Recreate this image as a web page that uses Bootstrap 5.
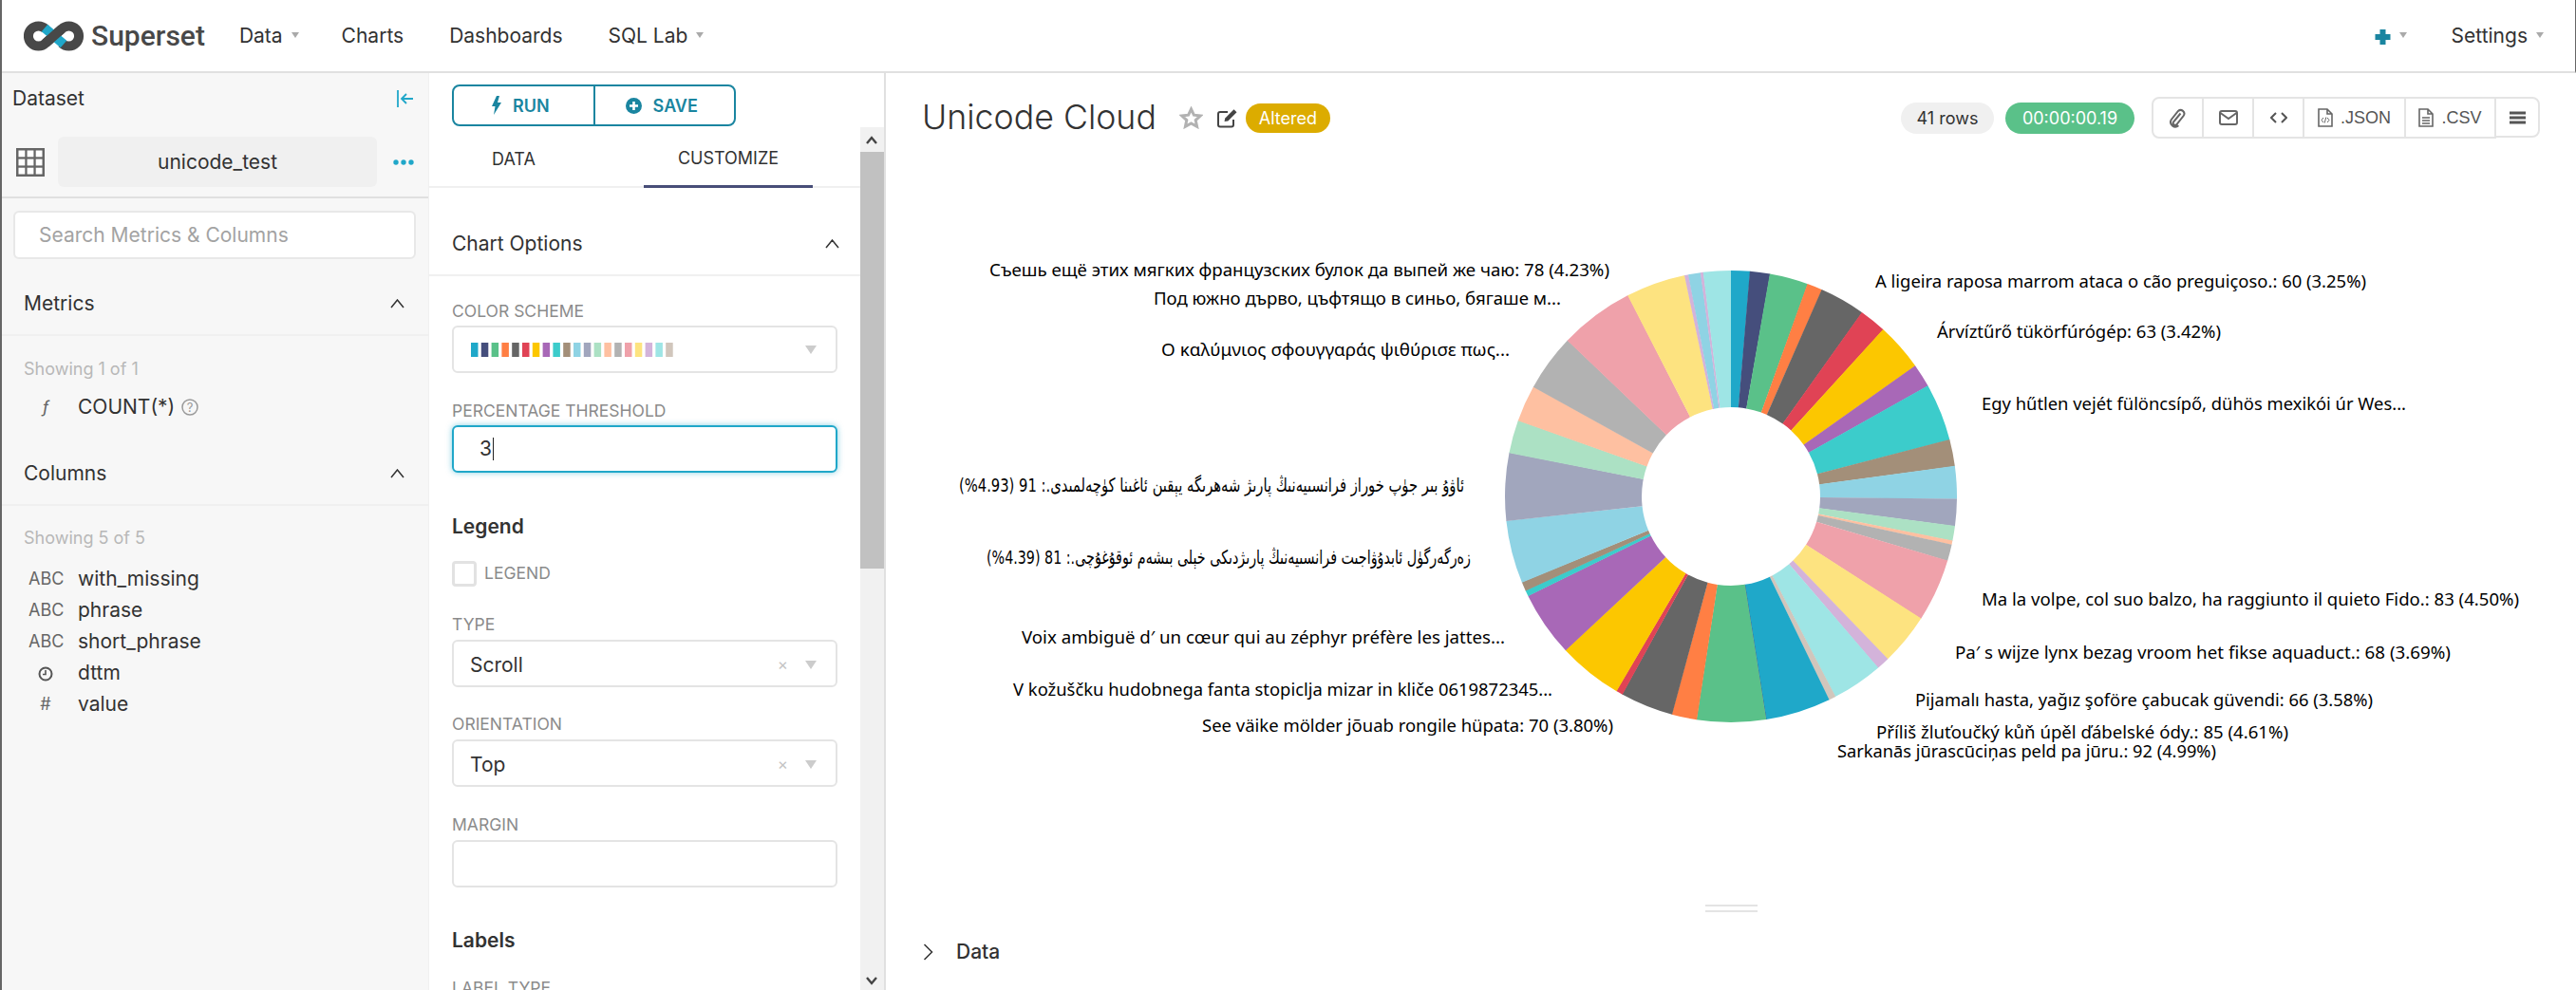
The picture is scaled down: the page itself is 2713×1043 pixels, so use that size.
<!DOCTYPE html>
<html lang="en">
<head>
<meta charset="utf-8">
<title>Unicode Cloud</title>
<link rel="stylesheet" href="https://cdn.jsdelivr.net/npm/bootstrap@5.3.0/dist/css/bootstrap.min.css">
<style>
html,body{height:100%;overflow:hidden}
body{font-family:Inter,"Noto Sans",sans-serif;font-size:21px;color:#323232;background:#fff;border-left:2px solid #666}
.topbar{height:77px;border-bottom:2px solid #e0e0e0;border-right:1px solid #666;padding:0 9px 0 0;background:#fff;flex-wrap:nowrap}
.brand-box{margin:0 0 0 23px;padding:0;gap:7px;color:#484848;font-family:Roboto,sans-serif;font-weight:500;font-size:30px;line-height:1}
.topbar .navbar-nav .nav-link{padding:0 24px;color:#323232;font-size:21px}
.topbar .brand-box+.navbar-nav{margin-left:12px}
.dropdown-toggle::after{border-top:6px solid #aaa;border-left:4px solid transparent;border-right:4px solid transparent;border-bottom:0;margin-left:9px;vertical-align:5px}
.topbar .navbar-nav .nav-link.first-toggle{padding-right:21px}
.topbar .navbar-nav .nav-link.plus-link{padding:0 23px 0 0}
.work-row{height:calc(100% - 77px);min-width:0}
.side-col{width:450px;flex:none;background:#f7f7f7;border-right:1px solid #f0f0f0;overflow:hidden}
.ds-head{height:54px;padding:0 15px 0 11px}
.ds-row{margin-top:13px;height:53px;padding:0 15px}
.ds-name{width:336px;height:53px;margin-left:14px;background:#f0f0f0;border-radius:6px}
.ds-rule{height:12px;border-bottom:2px solid #e0e0e0}
.search-box.form-control{display:block;margin:13px 13px 0 12px;width:424px;height:51px;padding:0 0 0 25px;font-size:21px;border:2px solid #e8e8e8;border-radius:6px;color:#323232}
.search-box::placeholder{color:#a3a3a3}
.sec-head{padding:15px 25px 0 23px;height:81px;border-bottom:2px solid #f0f0f0}
.sec-head.second{height:88px;padding-top:21px}
.hint{color:#b8b8b8;font-size:18px;line-height:27px;padding-left:23px;margin-top:21px}
.hint.second-hint{margin-top:20px}
.col-list{margin-top:10px}
.col-list.tall{margin-top:13px}
.col-item{height:33px;font-size:21px;color:#323232}
.type-mark{width:36px;margin-left:28px;margin-right:16px;color:#666;font-size:18px;text-align:center;line-height:1;flex:none}
.help-mark{margin-left:7px}
.panel-col{width:481px;flex:none;border-right:2px solid #e0e0e0;overflow:hidden}
.panel-top{height:57px;padding:12px 0 0 24px}
.run-group{width:299px;height:44px}
.run-group .btn{width:50%;padding:0 6px 0 0;font-size:18px;font-weight:600;color:#1a85a0;border:2px solid #1a85a0;background:#fff;display:flex;align-items:center;justify-content:center;gap:12px;border-radius:8px}
.btn-group.run-group>.btn+.btn{margin-left:-2px}
.panel-scroll{height:calc(100% - 57px)}
.panel-body{width:454px;flex:none;overflow:hidden}
.fake-bar{width:25px;flex:none;background:#f1f1f1;position:relative}
.fake-thumb{height:439px;margin-top:26px;background:#c1c1c1}
.bar-up,.bar-down{position:absolute;left:6px}
.bar-up{top:9px}.bar-down{bottom:5px}
.tab-row.nav{height:64px;border-bottom:2px solid #f0f0f0;flex-wrap:nowrap;gap:48px}
.tab-row .nav-link{width:178px;height:64px;padding:3px 0 0;text-align:center;background:none;border:0;border-radius:0;color:#323232;font-size:18px;display:flex;align-items:center;justify-content:center}
.tab-row .nav-link.active{border-bottom:3px solid #484e78;color:#323232}
.opt-head{height:93px;padding:27px 22px 0 24px;border-bottom:2px solid #f0f0f0;font-size:21px}
.form-zone{padding:0 24px}
.ctl-label{display:block;height:24px;line-height:24px;font-size:17.5px;color:#8b8b8b;text-transform:uppercase;margin:27px 0 4px}
.ctl-label.first{margin-top:25px;margin-bottom:3px}
.ctl-label.snug{margin-top:28px;margin-bottom:3px}
.ctl-label.type-label{margin-top:28px}
.ctl-label.margin-label{margin-top:28px}
.ctl-label.tail-label{margin-top:23px}
.ctl-box{height:50px;border:2px solid #e4e4e4;border-radius:6px;padding:0 17px;font-size:21px;color:#323232;background:#fff;position:relative}
.ctl-box.swatch-box{padding-left:18px}
.ctl-box.pick-box{padding-top:3px}
.focus-box{border-color:#20a7c9;box-shadow:0 0 6px rgba(32,167,201,.55);padding-left:27px}
.text-caret{display:inline-block;width:1px;height:24px;background:#222;margin-left:1px}
.cap-icon{margin-left:auto;margin-right:3px;width:0;height:0;border-top:9px solid #ccc;border-left:6px solid transparent;border-right:6px solid transparent;border-bottom:0}
.clear-mark{margin-left:auto;color:#c4c4c4;font-size:17px;margin-right:18px;line-height:1}
.clear-mark+.cap-icon{margin-left:0}
.group-title{height:30px;line-height:30px;font-size:21px;font-weight:600;color:#323232}
.legend-title{margin-top:42px}
.labels-title{margin-top:41px}
.check-row{margin-top:21px;height:27px;gap:8px}
.legend-check.form-check-input{width:26px;height:27px;margin:0;border:3px solid #e2e2e2;border-radius:4px;float:none}
.check-text{font-size:17.5px;color:#8b8b8b}
.main-col{flex:1 1 0;min-width:0;overflow:hidden;background:#fff}
.chart-head{height:94px;padding:0 38px 0 38px}
.chart-title{font-size:35.7px;font-weight:300;color:#323232;margin:0;line-height:1}
.star-mark{margin-left:24px}
.edit-mark{margin-left:15px}
.altered-pill.badge{margin-left:8px;height:31px;width:89px;background:#dcac00;font-size:18px;font-weight:400;line-height:31px;padding:0;color:#fff}
.stat-pill.badge{height:33px;line-height:33px;padding:0;font-size:18px;font-weight:400}
.rows-pill{width:98px;background:#f0f0f0;color:#323232;margin-right:12px}
.time-pill{width:136px;background:#5ac189;color:#fff;margin-right:18px}
.tool-group{height:44px}
.tool-group .btn{padding:0;height:44px;background:#fff;border:2px solid #e4e4e4;color:#555;font-size:18px;display:flex;align-items:center;justify-content:center;gap:8px;font-family:"Liberation Sans",sans-serif;border-radius:8px}
.btn-group.tool-group>.btn+.btn{margin-left:-2px}
.tool-group .btn.tool-f{height:43px}
.tool-a{width:55px}.tool-b{width:55px}.tool-c{width:55px}.tool-d{width:109px}.tool-e{width:97px}.tool-f{width:48px}
.pie-svg{display:block}
.pie-label{font-family:"Noto Sans","DejaVu Sans",sans-serif;font-size:18px;fill:#000;dominant-baseline:central}
.pie-label.uy-label{font-family:"DejaVu Sans",sans-serif;font-size:20px}
.split-grip{width:55px;height:8px;margin:12px auto 0;border-top:2px solid #e4e4e4;border-bottom:2px solid #e4e4e4}
.data-row{margin-top:30px;padding-left:39px;gap:24px;font-size:21px;font-weight:500;color:#323232;line-height:24px}
</style>
</head>
<body>
<nav class="navbar navbar-expand topbar">
  <a class="navbar-brand d-flex align-items-center brand-box" href="#">
    <svg width="64" height="32" viewBox="0 0 64 32" aria-hidden="true"><path d="M23 8.5A10.6 10.6 0 1 0 23 23.5L40 8.5A10.6 10.6 0 1 1 40 23.5" fill="none" stroke="#484848" stroke-width="10"/><path d="M22 7.5L42 24.5" fill="none" stroke="#20a7c9" stroke-width="10"/><path d="M23 23.5L40 8.5" fill="none" stroke="#484848" stroke-width="10"/></svg>
    <span>Superset</span>
  </a>
  <ul class="navbar-nav">
    <li class="nav-item"><a class="nav-link dropdown-toggle first-toggle" href="#">Data</a></li>
    <li class="nav-item"><a class="nav-link" href="#">Charts</a></li>
    <li class="nav-item"><a class="nav-link" href="#">Dashboards</a></li>
    <li class="nav-item"><a class="nav-link dropdown-toggle" href="#">SQL Lab</a></li>
  </ul>
  <ul class="navbar-nav ms-auto align-items-center">
    <li class="nav-item"><a class="nav-link dropdown-toggle plus-link" href="#"><svg width="17" height="18" viewBox="0 0 17 18" aria-hidden="true"><path d="M8.5 1v16M0.5 9h16" stroke="#1a85a0" stroke-width="6"/></svg></a></li>
    <li class="nav-item"><a class="nav-link dropdown-toggle" href="#" id="settingsLink">Settings</a></li>
  </ul>
</nav>

<div class="d-flex work-row">
  <aside class="side-col">
    <div class="d-flex align-items-center justify-content-between ds-head">
      <span>Dataset</span>
      <svg width="18" height="20" viewBox="0 0 18 20" aria-hidden="true"><path d="M1 1v18M17 10H6M10 5l-5 5 5 5" fill="none" stroke="#20a7c9" stroke-width="1.8"/></svg>
    </div>
    <div class="d-flex align-items-center ds-row">
      <svg width="30" height="30" viewBox="0 0 30 30" aria-hidden="true"><rect width="30" height="30" fill="#666"/><g fill="#fff"><rect x="2.500" y="2.500" width="6.800" height="6.800"/><rect x="11.600" y="2.500" width="6.800" height="6.800"/><rect x="20.700" y="2.500" width="6.800" height="6.800"/><rect x="2.500" y="11.600" width="6.800" height="6.800"/><rect x="11.600" y="11.600" width="6.800" height="6.800"/><rect x="20.700" y="11.600" width="6.800" height="6.800"/><rect x="2.500" y="20.700" width="6.800" height="6.800"/><rect x="11.600" y="20.700" width="6.800" height="6.800"/><rect x="20.700" y="20.700" width="6.800" height="6.800"/></g></svg>
      <div class="d-flex align-items-center justify-content-center ds-name">unicode_test</div>
      <svg width="22" height="6" viewBox="0 0 22 6" class="ms-auto" aria-hidden="true"><g fill="#20a7c9"><circle cx="3" cy="3" r="2.7"/><circle cx="11" cy="3" r="2.7"/><circle cx="19" cy="3" r="2.7"/></g></svg>
    </div>
    <div class="ds-rule"></div>
    <input class="form-control search-box" type="text" placeholder="Search Metrics &amp; Columns">
    <div class="d-flex align-items-center justify-content-between sec-head">
      <span>Metrics</span>
      <svg width="15" height="10" viewBox="0 0 15 10" aria-hidden="true"><path d="M1 9l6.5-8L14 9" fill="none" stroke="#323232" stroke-width="1.5"/></svg>
    </div>
    <div class="hint">Showing 1 of 1</div>
    <div class="col-list">
      <div class="d-flex align-items-center col-item"><span class="type-mark fst-italic">ƒ</span>COUNT(*)
        <svg class="help-mark" width="18" height="18" viewBox="0 0 18 18" aria-hidden="true"><circle cx="9" cy="9" r="8" fill="none" stroke="#999" stroke-width="1.5"/><text x="9" y="13.5" text-anchor="middle" font-size="13" fill="#999">?</text></svg>
      </div>
    </div>
    <div class="d-flex align-items-center justify-content-between sec-head second">
      <span>Columns</span>
      <svg width="15" height="10" viewBox="0 0 15 10" aria-hidden="true"><path d="M1 9l6.5-8L14 9" fill="none" stroke="#323232" stroke-width="1.5"/></svg>
    </div>
    <div class="hint second-hint">Showing 5 of 5</div>
    <div class="col-list tall">
      <div class="d-flex align-items-center col-item"><span class="type-mark">ABC</span>with_missing</div>
      <div class="d-flex align-items-center col-item"><span class="type-mark">ABC</span>phrase</div>
      <div class="d-flex align-items-center col-item"><span class="type-mark">ABC</span>short_phrase</div>
      <div class="d-flex align-items-center col-item"><span class="type-mark"><svg width="16" height="16" viewBox="0 0 16 16" aria-hidden="true"><circle cx="8" cy="8" r="6.5" fill="none" stroke="#555" stroke-width="2"/><path d="M8 4v4.5H5" fill="none" stroke="#555" stroke-width="1.6"/></svg></span>dttm</div>
      <div class="d-flex align-items-center col-item"><span class="type-mark">#</span>value</div>
    </div>
  </aside>

  <section class="panel-col">
    <div class="panel-top">
      <div class="btn-group run-group" role="group">
        <button type="button" class="btn"><svg width="10" height="20" viewBox="0 0 10 20" aria-hidden="true"><path d="M5 0L0 11h3.5L2 20l8-13H6l2-7z" fill="#1a85a0"/></svg>RUN</button>
        <button type="button" class="btn"><svg width="17" height="17" viewBox="0 0 17 17" aria-hidden="true"><circle cx="8.5" cy="8.5" r="8.5" fill="#1a85a0"/><path d="M8.5 4v9M4 8.5h9" stroke="#fff" stroke-width="2.6"/></svg>SAVE</button>
      </div>
    </div>
    <div class="d-flex panel-scroll">
      <div class="panel-body">
        <ul class="nav tab-row">
          <li class="nav-item"><a class="nav-link" href="#">DATA</a></li>
          <li class="nav-item"><a class="nav-link active" href="#">CUSTOMIZE</a></li>
        </ul>
        <div class="d-flex align-items-center justify-content-between opt-head">
          <span>Chart Options</span>
          <svg width="15" height="10" viewBox="0 0 15 10" aria-hidden="true"><path d="M1 9l6.5-8L14 9" fill="none" stroke="#323232" stroke-width="1.5"/></svg>
        </div>
        <div class="form-zone">
          <label class="ctl-label first">Color Scheme</label>
          <div class="d-flex align-items-center ctl-box swatch-box">
            <svg width="216" height="15" viewBox="0 0 216 15" aria-hidden="true">
              <rect x="0" width="7.5" height="15" fill="#1fa8c9"/><rect x="10.8" width="7.5" height="15" fill="#454e7c"/><rect x="21.6" width="7.5" height="15" fill="#5ac189"/><rect x="32.4" width="7.5" height="15" fill="#ff7f44"/><rect x="43.2" width="7.5" height="15" fill="#666"/><rect x="54" width="7.5" height="15" fill="#e04355"/><rect x="64.8" width="7.5" height="15" fill="#fcc700"/><rect x="75.6" width="7.5" height="15" fill="#a868b7"/><rect x="86.4" width="7.5" height="15" fill="#3ccccb"/><rect x="97.2" width="7.5" height="15" fill="#a38f79"/><rect x="108" width="7.5" height="15" fill="#8fd3e4"/><rect x="118.8" width="7.5" height="15" fill="#a1a6bd"/><rect x="129.6" width="7.5" height="15" fill="#ace1c4"/><rect x="140.4" width="7.5" height="15" fill="#fec0a1"/><rect x="151.2" width="7.5" height="15" fill="#b2b2b2"/><rect x="162" width="7.5" height="15" fill="#efa1aa"/><rect x="172.8" width="7.5" height="15" fill="#fde380"/><rect x="183.6" width="7.5" height="15" fill="#d3b3da"/><rect x="194.4" width="7.5" height="15" fill="#9ee5e5"/><rect x="205.2" width="7.5" height="15" fill="#d1c6bc"/>
            </svg>
            <span class="cap-icon"></span>
          </div>
          <label class="ctl-label snug">Percentage Threshold</label>
          <div class="d-flex align-items-center ctl-box focus-box">3<span class="text-caret"></span></div>
          <div class="group-title legend-title">Legend</div>
          <div class="d-flex align-items-center check-row">
            <input class="form-check-input legend-check" type="checkbox">
            <span class="check-text">LEGEND</span>
          </div>
          <label class="ctl-label type-label">Type</label>
          <div class="d-flex align-items-center ctl-box pick-box">Scroll<span class="clear-mark">×</span><span class="cap-icon"></span></div>
          <label class="ctl-label">Orientation</label>
          <div class="d-flex align-items-center ctl-box pick-box">Top<span class="clear-mark">×</span><span class="cap-icon"></span></div>
          <label class="ctl-label margin-label">Margin</label>
          <div class="ctl-box"></div>
          <div class="group-title labels-title">Labels</div>
          <label class="ctl-label tail-label">Label Type</label>
        </div>
      </div>
      <div class="fake-bar">
        <svg class="bar-up" width="12" height="9" viewBox="0 0 12 9" aria-hidden="true"><path d="M1 8l5-6 5 6" fill="none" stroke="#444" stroke-width="2.4"/></svg>
        <div class="fake-thumb"></div>
        <svg class="bar-down" width="12" height="9" viewBox="0 0 12 9" aria-hidden="true"><path d="M1 1l5 6 5-6" fill="none" stroke="#444" stroke-width="2.4"/></svg>
      </div>
    </div>
  </section>

  <main class="main-col">
    <div class="d-flex align-items-center chart-head">
      <h1 class="chart-title">Unicode Cloud</h1>
      <svg class="star-mark" width="25" height="24" viewBox="0 0 25 24" aria-hidden="true"><path d="M12.5 3l2.9 6.2 6.8.8-5 4.6 1.4 6.7-6.1-3.4-6.1 3.4 1.4-6.7-5-4.6 6.8-.8z" fill="none" stroke="#b2b2b2" stroke-width="3"/></svg>
      <svg class="edit-mark" width="22" height="21" viewBox="0 0 22 21" aria-hidden="true"><path d="M17 12v5.5a2 2 0 0 1-2 2H3a2 2 0 0 1-2-2V6a2 2 0 0 1 2-2h8" fill="none" stroke="#444" stroke-width="2"/><path d="M7.5 14l.8-3.5L17.5 1.300l3 3-9.200 9.200z" fill="#444"/></svg>
      <span class="badge rounded-pill altered-pill">Altered</span>
      <span class="badge rounded-pill stat-pill rows-pill ms-auto">41 rows</span>
      <span class="badge rounded-pill stat-pill time-pill">00:00:00.19</span>
      <div class="btn-group tool-group" role="group">
        <button type="button" class="btn tool-a" aria-label="link"><svg width="19" height="21" viewBox="0 0 19 21" aria-hidden="true"><path d="M12.500 5.500L5 14.500a2.200 2.200 0 0 0 3.300 2.800l7.500-9.500a3.800 3.800 0 0 0-5.800-4.800L2.800 12a5 5 0 0 0 7.600 6.300" fill="none" stroke="#666" stroke-width="2"/></svg></button>
        <button type="button" class="btn tool-b" aria-label="mail"><svg width="20" height="16" viewBox="0 0 20 16" aria-hidden="true"><rect x="1" y="1" width="18" height="14" rx="2" fill="none" stroke="#666" stroke-width="2"/><path d="M1.500 3l8.500 6 8.500-6" fill="none" stroke="#666" stroke-width="2"/></svg></button>
        <button type="button" class="btn tool-c" aria-label="code"><svg width="18" height="12" viewBox="0 0 18 12" aria-hidden="true"><path d="M6 1L1 6l5 5M12 1l5 5-5 5" fill="none" stroke="#555" stroke-width="2"/></svg></button>
        <button type="button" class="btn tool-d"><svg width="16" height="20" viewBox="0 0 16 20" aria-hidden="true"><path d="M1 1h9l5 5v13H1zM10 1v5h5" fill="none" stroke="#666" stroke-width="1.600"/><path d="M6 10l-2 2.500L6 15M10 10l2 2.500L10 15M8.800 9.500l-1.600 6" fill="none" stroke="#666" stroke-width="1"/></svg>.JSON</button>
        <button type="button" class="btn tool-e"><svg width="16" height="20" viewBox="0 0 16 20" aria-hidden="true"><path d="M1 1h9l5 5v13H1zM10 1v5h5" fill="none" stroke="#666" stroke-width="1.600"/><path d="M4 10h8M4 13h8M4 16h8" stroke="#666" stroke-width="1.300"/></svg>.CSV</button>
        <button type="button" class="btn tool-f" aria-label="menu"><svg width="17" height="14" viewBox="0 0 17 14" aria-hidden="true"><path d="M0 2h17M0 7h17M0 12h17" stroke="#555" stroke-width="2.800"/></svg></button>
      </div>
    </div>
    <svg class="pie-svg" width="1781" height="770" viewBox="932 171 1781 770" role="img" aria-label="Unicode Cloud pie chart">
      <g fill="none" stroke-width="144" transform="rotate(-90 1822 523)">
        <circle cx="1822" cy="523" r="166" pathLength="360" stroke-dasharray="4.9 360" stroke-dashoffset="0" stroke="#1fa8c9"/>
        <circle cx="1822" cy="523" r="166" pathLength="360" stroke-dasharray="5.2 360" stroke-dashoffset="-4.8" stroke="#454e7c"/>
        <circle cx="1822" cy="523" r="166" pathLength="360" stroke-dasharray="10 360" stroke-dashoffset="-9.9" stroke="#5ac189"/>
        <circle cx="1822" cy="523" r="166" pathLength="360" stroke-dasharray="4 360" stroke-dashoffset="-19.8" stroke="#ff7f44"/>
        <circle cx="1822" cy="523" r="166" pathLength="360" stroke-dasharray="11.8 360" stroke-dashoffset="-23.7" stroke="#666666"/>
        <circle cx="1822" cy="523" r="166" pathLength="360" stroke-dasharray="7 360" stroke-dashoffset="-35.4" stroke="#e04355"/>
        <circle cx="1822" cy="523" r="166" pathLength="360" stroke-dasharray="12.400 360" stroke-dashoffset="-42.3" stroke="#fcc700"/>
        <circle cx="1822" cy="523" r="166" pathLength="360" stroke-dasharray="6.100 360" stroke-dashoffset="-54.6" stroke="#a868b7"/>
        <circle cx="1822" cy="523" r="166" pathLength="360" stroke-dasharray="14.900 360" stroke-dashoffset="-60.6" stroke="#3ccccb"/>
        <circle cx="1822" cy="523" r="166" pathLength="360" stroke-dasharray="6.900 360" stroke-dashoffset="-75.4" stroke="#a38f79"/>
        <circle cx="1822" cy="523" r="166" pathLength="360" stroke-dasharray="8.500 360" stroke-dashoffset="-82.2" stroke="#8fd3e4"/>
        <circle cx="1822" cy="523" r="166" pathLength="360" stroke-dasharray="7 360" stroke-dashoffset="-90.6" stroke="#a1a6bd"/>
        <circle cx="1822" cy="523" r="166" pathLength="360" stroke-dasharray="3.900 360" stroke-dashoffset="-97.5" stroke="#ace1c4"/>
        <circle cx="1822" cy="523" r="166" pathLength="360" stroke-dasharray="1.100 360" stroke-dashoffset="-101.3" stroke="#fec0a1"/>
        <circle cx="1822" cy="523" r="166" pathLength="360" stroke-dasharray="4.300 360" stroke-dashoffset="-102.3" stroke="#b2b2b2"/>
        <circle cx="1822" cy="523" r="166" pathLength="360" stroke-dasharray="16.300 360" stroke-dashoffset="-106.5" stroke="#efa1aa"/>
        <circle cx="1822" cy="523" r="166" pathLength="360" stroke-dasharray="13.400 360" stroke-dashoffset="-122.7" stroke="#fde380"/>
        <circle cx="1822" cy="523" r="166" pathLength="360" stroke-dasharray="3.400 360" stroke-dashoffset="-136" stroke="#d3b3da"/>
        <circle cx="1822" cy="523" r="166" pathLength="360" stroke-dasharray="13.200 360" stroke-dashoffset="-139.3" stroke="#9ee5e5"/>
        <circle cx="1822" cy="523" r="166" pathLength="360" stroke-dasharray="1.900 360" stroke-dashoffset="-152.4" stroke="#d1c6bc"/>
        <circle cx="1822" cy="523" r="166" pathLength="360" stroke-dasharray="16.800 360" stroke-dashoffset="-154.2" stroke="#1fa8c9"/>
        <circle cx="1822" cy="523" r="166" pathLength="360" stroke-dasharray="0.200 360" stroke-dashoffset="-170.9" stroke="#454e7c"/>
        <circle cx="1822" cy="523" r="166" pathLength="360" stroke-dasharray="17.800 360" stroke-dashoffset="-171" stroke="#5ac189"/>
        <circle cx="1822" cy="523" r="166" pathLength="360" stroke-dasharray="6.500 360" stroke-dashoffset="-188.7" stroke="#ff7f44"/>
        <circle cx="1822" cy="523" r="166" pathLength="360" stroke-dasharray="13.700 360" stroke-dashoffset="-195.1" stroke="#666666"/>
        <circle cx="1822" cy="523" r="166" pathLength="360" stroke-dasharray="1.800 360" stroke-dashoffset="-208.7" stroke="#e04355"/>
        <circle cx="1822" cy="523" r="166" pathLength="360" stroke-dasharray="16.700 360" stroke-dashoffset="-210.4" stroke="#fcc700"/>
        <circle cx="1822" cy="523" r="166" pathLength="360" stroke-dasharray="16.900 360" stroke-dashoffset="-227" stroke="#a868b7"/>
        <circle cx="1822" cy="523" r="166" pathLength="360" stroke-dasharray="1.600 360" stroke-dashoffset="-243.8" stroke="#3ccccb"/>
        <circle cx="1822" cy="523" r="166" pathLength="360" stroke-dasharray="2.400 360" stroke-dashoffset="-245.3" stroke="#a38f79"/>
        <circle cx="1822" cy="523" r="166" pathLength="360" stroke-dasharray="16.200 360" stroke-dashoffset="-247.6" stroke="#8fd3e4"/>
        <circle cx="1822" cy="523" r="166" pathLength="360" stroke-dasharray="17.500 360" stroke-dashoffset="-263.7" stroke="#a1a6bd"/>
        <circle cx="1822" cy="523" r="166" pathLength="360" stroke-dasharray="8.600 360" stroke-dashoffset="-281.1" stroke="#ace1c4"/>
        <circle cx="1822" cy="523" r="166" pathLength="360" stroke-dasharray="9.500 360" stroke-dashoffset="-289.6" stroke="#fec0a1"/>
        <circle cx="1822" cy="523" r="166" pathLength="360" stroke-dasharray="14.700 360" stroke-dashoffset="-299" stroke="#b2b2b2"/>
        <circle cx="1822" cy="523" r="166" pathLength="360" stroke-dasharray="19.300 360" stroke-dashoffset="-313.6" stroke="#efa1aa"/>
        <circle cx="1822" cy="523" r="166" pathLength="360" stroke-dasharray="15.400 360" stroke-dashoffset="-332.8" stroke="#fde380"/>
        <circle cx="1822" cy="523" r="166" pathLength="360" stroke-dasharray="1.100 360" stroke-dashoffset="-348.1" stroke="#d3b3da"/>
        <circle cx="1822" cy="523" r="166" pathLength="360" stroke-dasharray="3.200 360" stroke-dashoffset="-349.1" stroke="#8fd3e4"/>
        <circle cx="1822" cy="523" r="166" pathLength="360" stroke-dasharray="0.800 360" stroke-dashoffset="-352.2" stroke="#d3b3da"/>
        <circle cx="1822" cy="523" r="166" pathLength="360" stroke-dasharray="7.100 360" stroke-dashoffset="-352.9" stroke="#9ee5e5"/>
      </g>
      <g class="pie-texts">
        <text class="pie-label" x="1041" y="284" textLength="653" lengthAdjust="spacingAndGlyphs">Съешь ещё этих мягких французских булок да выпей же чаю: 78 (4.23%)</text>
        <text class="pie-label" x="1214" y="314" textLength="429" lengthAdjust="spacingAndGlyphs">Под южно дърво, цъфтящо в синьо, бягаше м...</text>
        <text class="pie-label" x="1222" y="368" textLength="367" lengthAdjust="spacingAndGlyphs">Ο καλύμνιος σφουγγαράς ψιθύρισε πως...</text>
        <text class="pie-label uy-label" x="1541" y="511" direction="rtl" textLength="532" lengthAdjust="spacingAndGlyphs">ئاۋۇ بىر جۈپ خوراز فرانسىيەنىڭ پارىژ شەھرىگە يېقىن ئاغىنا كۈچەلمىدى.: 91 (4.93%)</text>
        <text class="pie-label uy-label" x="1548" y="587" direction="rtl" textLength="510" lengthAdjust="spacingAndGlyphs">زەرگەرگۈل ئابدۇۋاجىت فرانسىيەنىڭ پارىژدىكى خېلى بىشەم ئوقۇغۇچى.: 81 (4.39%)</text>
        <text class="pie-label" x="1075" y="671" textLength="509" lengthAdjust="spacingAndGlyphs">Voix ambiguë d′  un cœur qui au zéphyr préfère les jattes...</text>
        <text class="pie-label" x="1066" y="726" textLength="568" lengthAdjust="spacingAndGlyphs">V kožuščku hudobnega fanta stopiclja mizar in kliče 0619872345...</text>
        <text class="pie-label" x="1265" y="764" textLength="433" lengthAdjust="spacingAndGlyphs">See väike mölder jõuab rongile hüpata: 70 (3.80%)</text>
        <text class="pie-label" x="1974" y="296" textLength="517" lengthAdjust="spacingAndGlyphs">A ligeira raposa marrom ataca o cão preguiçoso.: 60 (3.25%)</text>
        <text class="pie-label" x="2039" y="349" textLength="299" lengthAdjust="spacingAndGlyphs">Árvíztűrő tükörfúrógép: 63 (3.42%)</text>
        <text class="pie-label" x="2086" y="425" textLength="447" lengthAdjust="spacingAndGlyphs">Egy hűtlen vejét fülöncsípő, dühös mexikói úr Wes...</text>
        <text class="pie-label" x="2086" y="631" textLength="566" lengthAdjust="spacingAndGlyphs">Ma la volpe, col suo balzo, ha raggiunto il quieto Fido.: 83 (4.50%)</text>
        <text class="pie-label" x="2058" y="687" textLength="522" lengthAdjust="spacingAndGlyphs">Pa′  s wijze lynx bezag vroom het fikse aquaduct.: 68 (3.69%)</text>
        <text class="pie-label" x="2016" y="737" textLength="482" lengthAdjust="spacingAndGlyphs">Pijamalı hasta, yağız şoföre çabucak güvendi: 66 (3.58%)</text>
        <text class="pie-label" x="1975" y="771" textLength="434" lengthAdjust="spacingAndGlyphs">Příliš žluťoučký kůň úpěl ďábelské ódy.: 85 (4.61%)</text>
        <text class="pie-label" x="1934" y="791" textLength="399" lengthAdjust="spacingAndGlyphs">Sarkanās jūrascūciņas peld pa jūru.: 92 (4.99%)</text>
      </g>
    </svg>
    <div class="split-grip"></div>
    <div class="d-flex align-items-center data-row">
      <svg width="11" height="18" viewBox="0 0 11 18" aria-hidden="true"><path d="M1.500 1l8 8-8 8" fill="none" stroke="#323232" stroke-width="1.500"/></svg>
      <span>Data</span>
    </div>
  </main>
</div>
<script src="https://cdn.jsdelivr.net/npm/bootstrap@5.3.0/dist/js/bootstrap.bundle.min.js"></script>
</body>
</html>
